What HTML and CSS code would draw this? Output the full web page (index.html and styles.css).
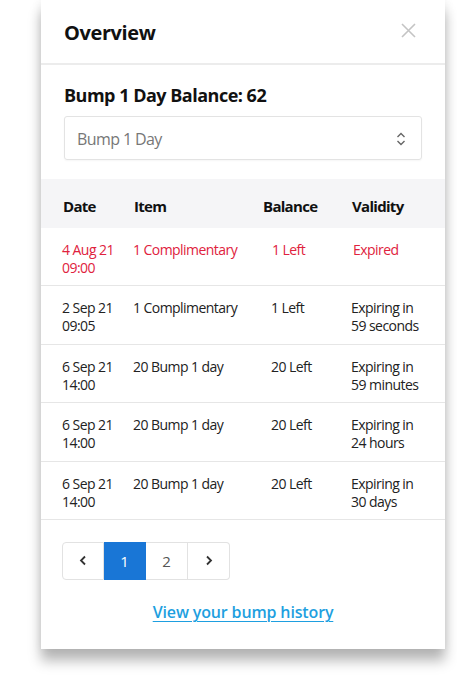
FILE: index.html
```html
<!DOCTYPE html>
<html>
<head>
<meta charset="utf-8">
<link rel="stylesheet" href="styles.css">
</head>
<body>
<div class="page">
  <div class="card">
    <div class="card-header">
      <h1 class="title">Overview</h1>
      <button class="close" aria-label="Close">
        <svg width="15" height="15" viewBox="0 0 15 15"><path d="M1 1L14 14M14 1L1 14" stroke="#c4c4c4" stroke-width="1.6" fill="none"/></svg>
      </button>
    </div>
    <div class="balance">
      <h2 class="balance-title">Bump 1 Day Balance: 62</h2>
      <div class="select">
        <span class="select-value">Bump 1 Day</span>
        <svg class="select-arrows" width="10" height="14" viewBox="0 0 10 14"><path d="M1.5 5L5 1.5L8.5 5M1.5 9L5 12.5L8.5 9" stroke="#666" stroke-width="1.4" fill="none"/></svg>
      </div>
    </div>
    <div class="table">
      <div class="row head">
        <div>Date</div><div>Item</div><div>Balance</div><div>Validity</div>
      </div>
      <div class="row expired">
        <div>4 Aug 21<br>09:00</div><div>1 Complimentary</div><div class="bal">1 Left</div><div class="val">Expired</div>
      </div>
      <div class="row">
        <div>2 Sep 21<br>09:05</div><div>1 Complimentary</div><div class="bal">1 Left</div><div>Expiring in<br>59 seconds</div>
      </div>
      <div class="row">
        <div>6 Sep 21<br>14:00</div><div>20 Bump 1 day</div><div class="bal">20 Left</div><div>Expiring in<br>59 minutes</div>
      </div>
      <div class="row">
        <div>6 Sep 21<br>14:00</div><div>20 Bump 1 day</div><div class="bal">20 Left</div><div>Expiring in<br>24 hours</div>
      </div>
      <div class="row">
        <div>6 Sep 21<br>14:00</div><div>20 Bump 1 day</div><div class="bal">20 Left</div><div>Expiring in<br>30 days</div>
      </div>
    </div>
    <div class="pagination">
      <span class="pg"><svg width="8" height="11" viewBox="0 0 8 11"><path d="M6 1.5L2 5.5L6 9.5" stroke="#333" stroke-width="1.8" fill="none"/></svg></span>
      <span class="pg active">1</span>
      <span class="pg">2</span>
      <span class="pg"><svg width="8" height="11" viewBox="0 0 8 11"><path d="M2 1.5L6 5.5L2 9.5" stroke="#333" stroke-width="1.8" fill="none"/></svg></span>
    </div>
    <div class="footer">
      <a class="history" href="#">View your bump history</a>
    </div>
  </div>
</div>
</body>
</html>
```
FILE: styles.css
```css
* { box-sizing: border-box; }
html, body { margin: 0; padding: 0; background: #fff; }
body { font-family: "Open Sans", "Noto Sans", sans-serif; color: #111; }
.page { padding: 0 12px 29px 41px; }
.card {
  width: 404px;
  background: #fff;
  box-shadow: 0 12px 12px rgba(0,0,0,0.28), 0 0 10px rgba(0,0,0,0.08);
}
.card-header {
  height: 65px;
  display: flex;
  align-items: center;
  justify-content: space-between;
  padding: 2px 29px 0 23px;
  border-bottom: 2px solid #ececec;
}
.title { margin: 0; font-size: 20px; letter-spacing: -0.4px; font-weight: 700; line-height: 26px; color: #111; }
.close { border: 0; background: none; padding: 0; display: flex; margin-top: -5px; }
.balance { padding: 18px 23px 19px 23px; }
.balance-title { margin: 0 0 9px; font-size: 18px; letter-spacing: -0.5px; font-weight: 700; line-height: 24px; color: #111; }
.select {
  height: 44px;
  border: 1px solid #e3e3e3;
  border-radius: 3px;
  display: flex;
  align-items: center;
  justify-content: space-between;
  padding: 1px 15px 0 12px;
  box-shadow: 0 1px 2px rgba(0,0,0,0.04);
}
.select-value { font-size: 16px; letter-spacing: -0.6px; color: #777; }
.table { font-size: 14px; letter-spacing: -0.55px; line-height: 18px; color: #222; }
.row {
  display: grid;
  grid-template-columns: 71px 129px 89px 1fr;
  padding: 13px 0 8.4px 21px;
  border-bottom: 1px solid #e6e6e6;
}
.row.head {
  background: #f5f5f7;
  height: 49px;
  padding: 5px 0 0 22px;
  align-items: center;
  font-size: 15px;
  letter-spacing: -0.7px;
  font-weight: 700;
  color: #111;
  border-bottom: 0;
}
.bal { padding-left: 9px; }
.row.expired { color: #e0223d; }
.row.expired .bal { padding-left: 10px; }
.row.expired .val { padding-left: 2px; }
.pagination { display: flex; padding: 22px 0 0 21px; }
.pg {
  width: 42px;
  height: 38px;
  display: flex;
  align-items: center;
  justify-content: center;
  border: 1px solid #e2e2e2;
  border-left: 0;
  font-size: 15px;
  color: #555;
}
.pg:first-child { border-left: 1px solid #e2e2e2; border-radius: 4px 0 0 4px; }
.pg:last-child { border-radius: 0 4px 4px 0; }
.pg.active { background: #1976d6; border-color: #1976d6; color: #fff; }
.footer { text-align: center; padding: 21px 0 26px; }
.history {
  font-size: 16px;
  letter-spacing: -0.15px;
  font-weight: 600;
  line-height: 22px;
  color: #1e9fe0;
  text-decoration: underline;
  text-decoration-thickness: 1px;
  text-underline-offset: 3px;
}
```
